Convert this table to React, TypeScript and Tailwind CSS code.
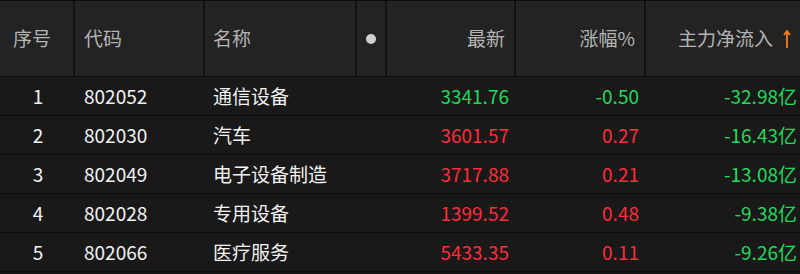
import React from "react";

type Row = {
  no: number;
  code: string;
  name: string;
  price: string;
  pct: string;
  flow: string;
  up: boolean;
};

const rows: Row[] = [
  { no: 1, code: "802052", name: "通信设备", price: "3341.76", pct: "-0.50", flow: "-32.98亿", up: false },
  { no: 2, code: "802030", name: "汽车", price: "3601.57", pct: "0.27", flow: "-16.43亿", up: true },
  { no: 3, code: "802049", name: "电子设备制造", price: "3717.88", pct: "0.21", flow: "-13.08亿", up: true },
  { no: 4, code: "802028", name: "专用设备", price: "1399.52", pct: "0.48", flow: "-9.38亿", up: true },
  { no: 5, code: "802066", name: "医疗服务", price: "5433.35", pct: "0.11", flow: "-9.26亿", up: true },
];

const cols = "grid grid-cols-[75px_130px_152px_30px_129px_130px_1fr]";

const SortArrow = () => (
  <svg width="8" height="20" viewBox="0 0 8 20" fill="none" stroke="#ff7a1a" strokeWidth="1.8">
    <path d="M4 2 V19" />
    <path d="M1 6 L4 2 L7 6" />
  </svg>
);

const App = () => {
  return (
    <div
      className="w-[800px] h-[274px] bg-[#141414] overflow-hidden text-[19px]"
      style={{ fontFamily: '"Noto Sans CJK SC", "Noto Sans", sans-serif' }}
    >
      <div className={`${cols} h-[77px] bg-[#232323] border-t border-[#0c0c0c] border-b border-b-[#0c0c0c] text-[#b4b4b4]`}>
        <div className="flex items-center pl-[13px] border-r-2 border-[#111]">序号</div>
        <div className="flex items-center pl-[9px] border-r-2 border-[#111]">代码</div>
        <div className="flex items-center pl-[8px] border-r-2 border-[#111]">名称</div>
        <div className="flex items-center justify-center border-r-2 border-[#111]">
          <span className="w-[10px] h-[10px] rounded-full bg-[#cfcfcf]" />
        </div>
        <div className="flex items-center justify-end pr-[9px] border-r-2 border-[#111]">最新</div>
        <div className="flex items-center justify-end pr-[9px] border-r-2 border-[#111]">涨幅%</div>
        <div className="flex items-center justify-end pr-[9px] gap-[10px]">
          <span>主力净流入</span>
          <SortArrow />
        </div>
      </div>
      {rows.map((r) => (
        <div
          key={r.no}
          className={`${cols} h-[39px] bg-[#191919] border-b border-[#0c0c0c] text-[#f2f2f2]`}
        >
          <div className="flex items-center justify-center pl-[1px]">{r.no}</div>
          <div className="flex items-center pl-[9px]">{r.code}</div>
          <div className="flex items-center pl-[8px]">{r.name}</div>
          <div />
          <div className={`flex items-center justify-end pr-[7px] ${r.up ? "text-[#ff2d3a]" : "text-[#25d85a]"}`}>
            {r.price}
          </div>
          <div className={`flex items-center justify-end pr-[7px] ${r.up ? "text-[#ff2d3a]" : "text-[#25d85a]"}`}>
            {r.pct}
          </div>
          <div className="flex items-center justify-end pr-[3px] text-[#25d85a]">{r.flow}</div>
        </div>
      ))}
    </div>
  );
};

export default App;
